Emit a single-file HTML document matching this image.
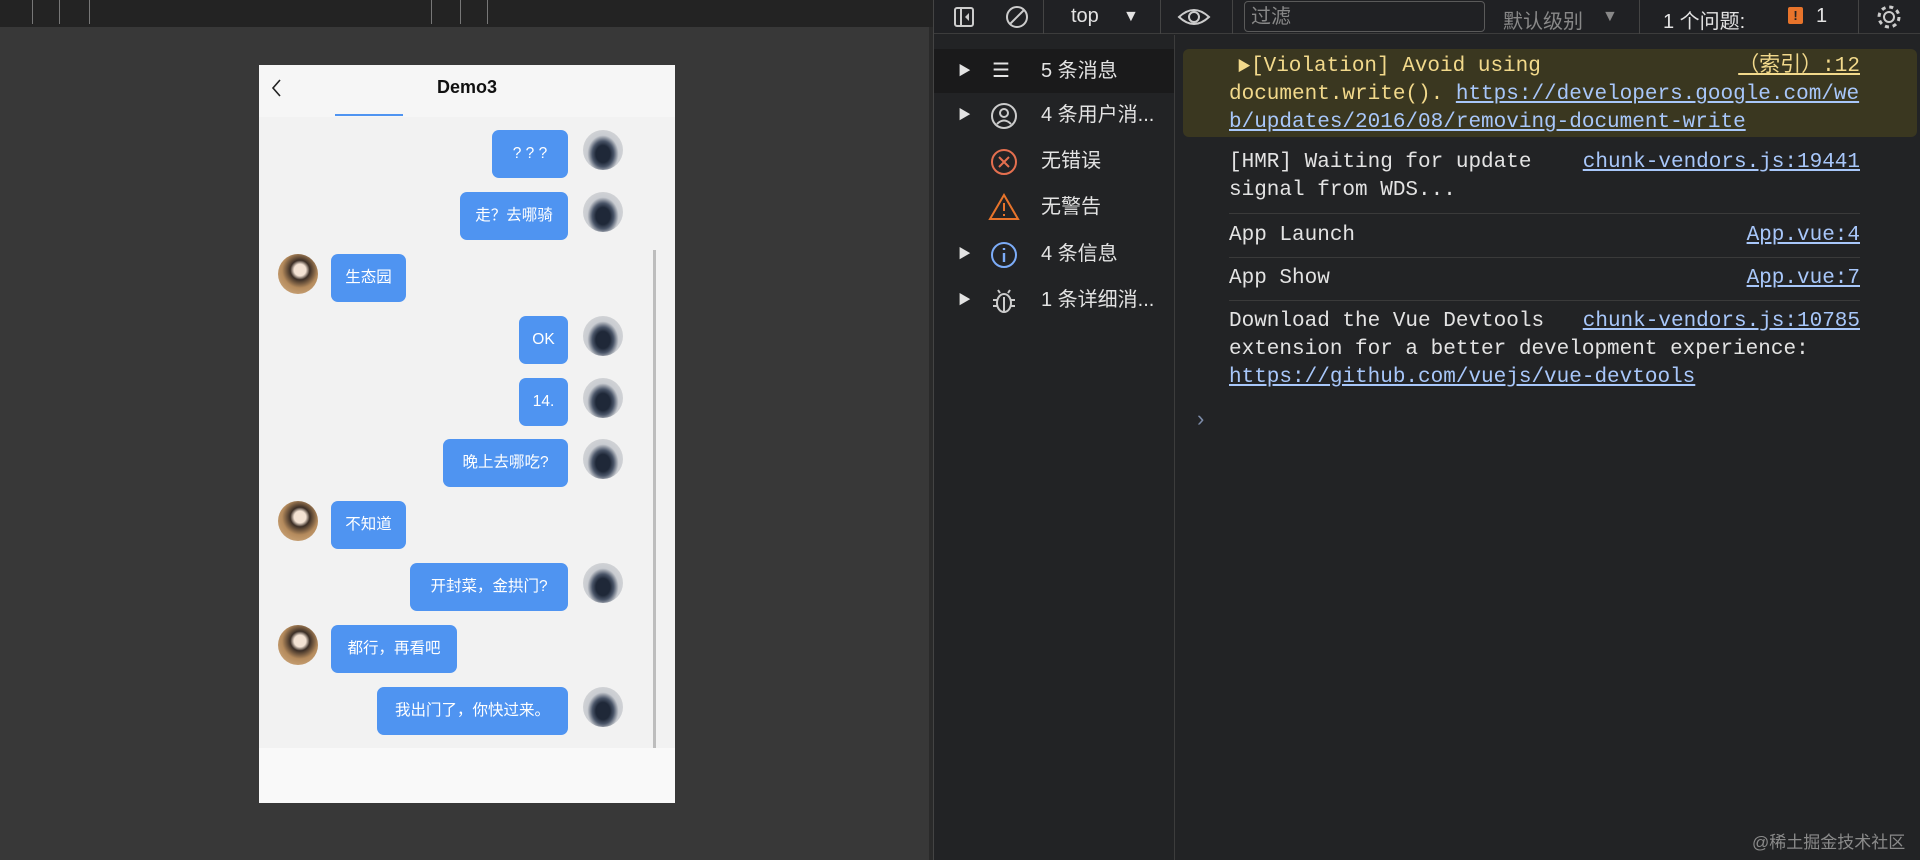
<!DOCTYPE html>
<html><head><meta charset="utf-8">
<style>
*{margin:0;padding:0;box-sizing:border-box}
body{width:1920px;height:860px;overflow:hidden;background:#383838;font-family:"Liberation Sans","Noto Sans CJK SC",sans-serif;position:relative}
.abs{position:absolute}
.top{left:0;top:0;width:933px;height:27px;background:#232323}
.tick{position:absolute;top:0;width:1px;height:24px;background:#777}
.phone{left:259px;top:65px;width:416px;height:738px;background:#f2f2f2;overflow:hidden}
.hdr{left:0;top:0;width:416px;height:52px;background:#f6f6f6}
.title{left:0;top:12px;width:416px;text-align:center;font-weight:bold;font-size:18px;color:#111}
.bub{position:absolute;height:48px;background:#4f94f1;border-radius:7px;color:#fff;font-size:15.5px;line-height:48px;text-align:center}
.av{position:absolute;width:40px;height:40px;border-radius:50%}
.avr{background:radial-gradient(ellipse at 50% 60%,#1f2838 0 25%,#4a5568 38%,#c9ccd1 55%,#dcdcdc 100%)}
.avl{background:radial-gradient(circle at 55% 40%,#f3e2d3 0 18%,#3b2e26 30%,#b48a5c 55%,#d9b58a 100%)}
.dt{left:933px;top:0;width:987px;height:860px;background:#222325;border-left:1px solid #444}
.tb{left:0;top:0;width:987px;height:34px;background:#202124;border-bottom:1px solid #3c3c3c;color:#e3e3e3;font-size:20px}
.tb .t{top:5px}
.sb{left:0;top:35px;width:241px;height:825px;border-right:1px solid #3c3c3c}
.srow{position:absolute;left:0;width:240px;height:44px;color:#e3e3e3;font-size:20px;line-height:44px}
.mono{font-family:"Liberation Mono","Noto Sans CJK SC",monospace;font-size:21px;color:#e3e3e3;line-height:28px;white-space:pre}
.r{right:60px}
a{color:#a8c7fa;text-decoration:underline}
.sep{position:absolute;left:1229px;width:631px;height:1px;background:#3a3a3a}
</style></head><body>
<div class="abs top">
<div class="tick" style="left:32px"></div><div class="tick" style="left:59px"></div><div class="tick" style="left:89px"></div>
<div class="tick" style="left:431px"></div><div class="tick" style="left:460px"></div><div class="tick" style="left:487px"></div>
</div>
<div class="abs" style="left:929px;top:27px;width:4px;height:833px;background:#2a2a2a"></div>

<div class="abs phone">
 <div class="abs hdr"></div>
 <svg class="abs" style="left:10px;top:12px" width="16" height="22" viewBox="0 0 16 22"><path d="M11 3 L4 11 L11 19" stroke="#222" stroke-width="1.6" fill="none"/></svg>
 <div class="abs title">Demo3</div>
 <div class="abs" style="left:76px;top:49px;width:68px;height:2px;background:#4f94f1"></div>
 <div class="abs" style="left:394px;top:185px;width:3px;height:498px;background:#bdbdbd"></div>
 <div class="abs" style="left:0;top:683px;width:416px;height:55px;background:#f9f9f9"></div>

 <div class="bub" style="left:233px;top:65px;width:76px">? ? ?</div><div class="av avr" style="left:324px;top:65px"></div>
 <div class="bub" style="left:201px;top:127px;width:108px">走？去哪骑</div><div class="av avr" style="left:324px;top:127px"></div>
 <div class="av avl" style="left:19px;top:189px"></div><div class="bub" style="left:72px;top:189px;width:75px">生态园</div>
 <div class="bub" style="left:260px;top:251px;width:49px">OK</div><div class="av avr" style="left:324px;top:251px"></div>
 <div class="bub" style="left:260px;top:313px;width:49px">14.</div><div class="av avr" style="left:324px;top:313px"></div>
 <div class="bub" style="left:184px;top:374px;width:125px">晚上去哪吃?</div><div class="av avr" style="left:324px;top:374px"></div>
 <div class="av avl" style="left:19px;top:436px"></div><div class="bub" style="left:72px;top:436px;width:75px">不知道</div>
 <div class="bub" style="left:151px;top:498px;width:158px">开封菜，金拱门?</div><div class="av avr" style="left:324px;top:498px"></div>
 <div class="av avl" style="left:19px;top:560px"></div><div class="bub" style="left:72px;top:560px;width:126px">都行，再看吧</div>
 <div class="bub" style="left:118px;top:622px;width:191px">我出门了，你快过来。</div><div class="av avr" style="left:324px;top:622px"></div>
</div>

<div class="abs dt">
 <div class="abs tb">
  <svg class="abs" style="left:18px;top:5px" width="24" height="24" viewBox="0 0 24 24"><rect x="3" y="3" width="18" height="18" rx="2" stroke="#ccc" stroke-width="2" fill="none"/><line x1="9" y1="3" x2="9" y2="21" stroke="#ccc" stroke-width="2"/><path d="M17 8 L13 12 L17 16Z" fill="#ccc"/></svg>
  <svg class="abs" style="left:70px;top:4px" width="26" height="26" viewBox="0 0 26 26"><circle cx="13" cy="13" r="10" stroke="#ccc" stroke-width="2" fill="none"/><line x1="6" y1="20" x2="20" y2="6" stroke="#ccc" stroke-width="2"/></svg>
  <div class="abs" style="left:109px;top:0;width:1px;height:34px;background:#444"></div>
  <div class="abs t" style="left:137px">top</div>
  <div class="abs t" style="left:189px;font-size:16px;top:8px">▼</div>
  <div class="abs" style="left:226px;top:0;width:1px;height:34px;background:#444"></div>
  <svg class="abs" style="left:243px;top:4px" width="34" height="26" viewBox="0 0 34 26"><path d="M2 13 Q17 -1 32 13 Q17 27 2 13Z" stroke="#ccc" stroke-width="2" fill="none"/><circle cx="17" cy="13" r="5" stroke="#ccc" stroke-width="2" fill="none"/></svg>
  <div class="abs" style="left:298px;top:0;width:1px;height:34px;background:#444"></div>
  <div class="abs" style="left:310px;top:1px;width:241px;height:31px;border:1px solid #5a5a5a;border-radius:4px;color:#888;padding-left:6px;line-height:30px">过滤</div>
  <div class="abs t" style="left:569px;color:#888">默认级别</div>
  <div class="abs t" style="left:668px;color:#888;font-size:16px;top:8px">▼</div>
  <div class="abs" style="left:705px;top:0;width:1px;height:34px;background:#444"></div>
  <div class="abs t" style="left:729px">1 个问题:</div>
  <div class="abs" style="left:854px;top:7px;width:15px;height:17px;background:#e8742b;border-radius:2px;color:#222;font-size:13px;text-align:center;line-height:17px;font-weight:bold">!</div>
  <div class="abs t" style="left:882px">1</div>
  <div class="abs" style="left:924px;top:0;width:1px;height:34px;background:#444"></div>
  <svg class="abs" style="left:941px;top:3px" width="28" height="28" viewBox="0 0 28 28"><circle cx="14" cy="14" r="5" stroke="#ccc" stroke-width="2" fill="none"/><circle cx="14" cy="14" r="10" stroke="#ccc" stroke-width="3" stroke-dasharray="4 3.85" fill="none"/></svg>
 </div>

 <div class="abs sb">
  <div class="srow" style="top:14px;background:#1a1a1b"><span class="abs" style="left:24px;font-size:13px">▶</span><span class="abs" style="left:58px">☰</span><span class="abs" style="left:107px">5 条消息</span></div>
  <div class="srow" style="top:58px"><span class="abs" style="left:24px;font-size:13px">▶</span><svg class="abs" style="left:56px;top:9px" width="28" height="28" viewBox="0 0 28 28"><circle cx="14" cy="14" r="12" stroke="#ccc" stroke-width="2" fill="none"/><circle cx="14" cy="11" r="4" stroke="#ccc" stroke-width="2" fill="none"/><path d="M7 22 Q14 15 21 22" stroke="#ccc" stroke-width="2" fill="none"/></svg><span class="abs" style="left:107px">4 条用户消...</span></div>
  <div class="srow" style="top:104px"><svg class="abs" style="left:56px;top:9px" width="28" height="28" viewBox="0 0 28 28"><circle cx="14" cy="14" r="12" stroke="#e46f4f" stroke-width="2" fill="none"/><path d="M9 9 L19 19 M19 9 L9 19" stroke="#e46f4f" stroke-width="2"/></svg><span class="abs" style="left:107px">无错误</span></div>
  <div class="srow" style="top:150px"><svg class="abs" style="left:54px;top:8px" width="32" height="28" viewBox="0 0 32 28"><path d="M16 2 L30 26 L2 26Z" stroke="#e8742b" stroke-width="2" fill="none"/><path d="M16 10 V18 M16 21 V23" stroke="#e8742b" stroke-width="2"/></svg><span class="abs" style="left:107px">无警告</span></div>
  <div class="srow" style="top:197px"><span class="abs" style="left:24px;font-size:13px">▶</span><svg class="abs" style="left:56px;top:9px" width="28" height="28" viewBox="0 0 28 28"><circle cx="14" cy="14" r="12" stroke="#7cacf8" stroke-width="2" fill="none"/><path d="M14 12 V21 M14 7 V9" stroke="#7cacf8" stroke-width="2.4"/></svg><span class="abs" style="left:107px">4 条信息</span></div>
  <div class="srow" style="top:243px"><span class="abs" style="left:24px;font-size:13px">▶</span><svg class="abs" style="left:58px;top:10px" width="24" height="26" viewBox="0 0 24 26"><ellipse cx="12" cy="15" rx="7" ry="9" stroke="#ccc" stroke-width="2" fill="none"/><path d="M5 12 H1 M5 18 H1 M19 12 H23 M19 18 H23 M8 5 L6 2 M16 5 L18 2 M12 9 V24" stroke="#ccc" stroke-width="2"/></svg><span class="abs" style="left:107px">1 条详细消...</span></div>
 </div>
</div>

<div class="abs" style="left:1183px;top:49px;width:734px;height:88px;background:#3a3720;border-radius:6px"></div>
<div class="abs mono" style="left:1237px;top:53px;color:#f2d98b"><span style="font-size:14px">▶</span>[Violation] Avoid using</div>
<div class="abs mono r" style="top:53px;color:#f2d98b;text-decoration:underline">（索引）:12</div>
<div class="abs mono" style="left:1229px;top:81px;color:#f2d98b">document.write(). <a>https://developers.google.com/we</a></div>
<div class="abs mono" style="left:1229px;top:109px"><a>b/updates/2016/08/removing-document-write</a></div>

<div class="abs mono" style="left:1229px;top:149px">[HMR] Waiting for update</div>
<div class="abs mono r" style="top:149px"><a>chunk-vendors.js:19441</a></div>
<div class="abs mono" style="left:1229px;top:177px">signal from WDS...</div>
<div class="sep" style="top:213px"></div>
<div class="abs mono" style="left:1229px;top:222px">App Launch</div>
<div class="abs mono r" style="top:222px"><a>App.vue:4</a></div>
<div class="sep" style="top:257px"></div>
<div class="abs mono" style="left:1229px;top:265px">App Show</div>
<div class="abs mono r" style="top:265px"><a>App.vue:7</a></div>
<div class="sep" style="top:300px"></div>
<div class="abs mono" style="left:1229px;top:308px">Download the Vue Devtools</div>
<div class="abs mono r" style="top:308px"><a>chunk-vendors.js:10785</a></div>
<div class="abs mono" style="left:1229px;top:336px">extension for a better development experience:</div>
<div class="abs mono" style="left:1229px;top:364px"><a>https://github.com/vuejs/vue-devtools</a></div>
<div class="abs" style="left:1197px;top:406px;color:#7c8ba8;font-size:22px">›</div>
<div class="abs" style="left:1752px;top:828px;color:#8a8a8a;font-size:17px">@稀土掘金技术社区</div>
</body></html>
